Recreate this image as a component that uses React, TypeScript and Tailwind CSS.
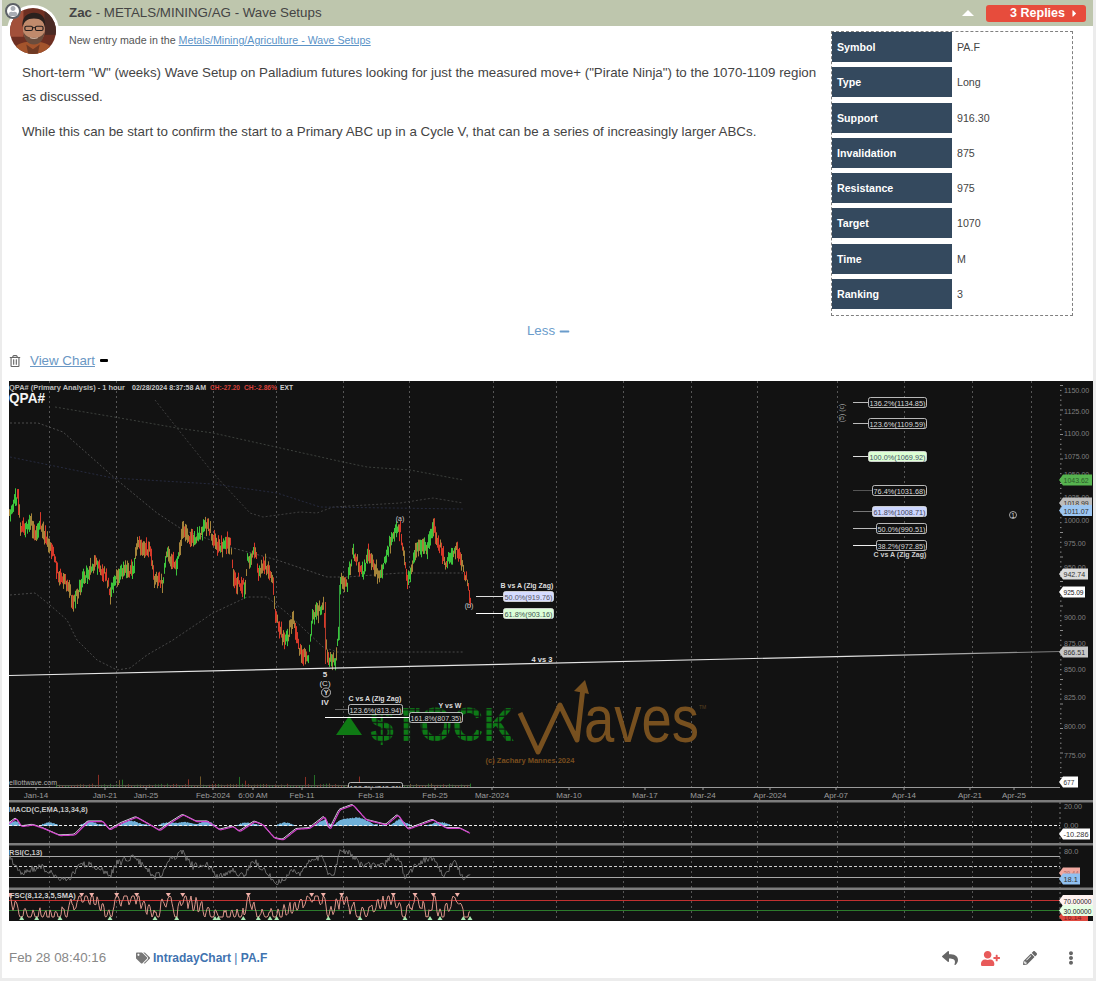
import { FaCaretRight, FaEllipsisV, FaMinus, FaPencilAlt, FaRegTrashAlt, FaReply, FaTags, FaUser, FaUserPlus } from "react-icons/fa"

type Pt = [number, number]

// small seeded generator so the chart comes out the same every load
function rng(seed: number) {
  let s = seed
  return () => {
    s = (s + 0x6d2b79f5) | 0
    let t = Math.imul(s ^ (s >>> 15), 1 | s)
    t = (t + Math.imul(t ^ (t >>> 7), 61 | t)) ^ t
    return ((t ^ (t >>> 14)) >>> 0) / 4294967296
  }
}

function interp(pts: Pt[], x: number) {
  if (x <= pts[0][0]) return pts[0][1]
  for (let i = 1; i < pts.length; i++) {
    if (x <= pts[i][0]) {
      const [x0, y0] = pts[i - 1]
      const [x1, y1] = pts[i]
      return y0 + ((y1 - y0) * (x - x0)) / (x1 - x0)
    }
  }
  return pts[pts.length - 1][1]
}

const toLine = (pts: Pt[]) => pts.map(([x, y]) => `${x.toFixed(1)},${y.toFixed(1)}`).join(" ")
const zoomPts = (z: Pt[]): Pt[] => z.map(([x, y]) => [x / 3, 770 + y / 3])

function smooth(pts: Pt[], win: number) {
  const out: Pt[] = []
  for (let x = 9; x <= 470; x++) {
    let sum = 0
    for (let k = -win; k <= win; k++) sum += interp(pts, x + k)
    out.push([x, sum / (win * 2 + 1)])
  }
  return out
}

const pricePath: Pt[] = [
  [9, 517], [14, 500], [18, 496], [20, 525], [24, 530], [30, 520], [35, 535], [40, 525], [46, 540], [52, 550], [58, 575], [63, 578],
  [70, 590], [72, 605], [78, 590], [85, 575], [92, 565], [98, 565], [105, 575], [110, 592], [115, 577], [125, 570], [133, 570],
  [137, 545], [150, 550], [153, 577], [162, 583], [167, 553], [177, 567], [182, 530], [193, 540], [207, 524], [217, 547], [230, 543],
  [233, 580], [245, 587], [247, 560], [255, 552], [258, 573], [263, 563], [272, 577], [275, 617], [285, 643], [293, 618], [300, 653],
  [308, 658], [312, 617], [323, 605], [327, 660], [335, 660], [338, 630], [340, 582], [347, 583], [352, 553], [363, 573], [367, 555],
  [380, 577], [392, 535], [400, 530], [407, 580], [417, 550], [427, 547], [433, 526], [445, 563], [457, 548], [467, 583], [469, 598],
]

function buildCandles() {
  const r = rng(7)
  const d = { g: "", o: "", e: "" }
  for (let x = 9; x <= 470; x++) {
    const y = interp(pricePath, x) + (r() - 0.5) * 9
    const h = 3 + r() * 6
    const slope = interp(pricePath, x + 2) - interp(pricePath, x - 2)
    const c = r()
    const seg = `M${x + 0.5} ${(y - h).toFixed(1)}V${(y + h).toFixed(1)}`
    if (slope < -1.5) {
      if (c < 0.62) d.g += seg
      else d.o += seg
    } else if (slope > 1.5) {
      if (c < 0.55) d.e += seg
      else d.o += seg
    } else if (c < 0.3) d.g += seg
    else if (c < 0.75) d.o += seg
    else d.e += seg
  }
  return d
}

const candles = buildCandles()

const macd = smooth(zoomPts([
  [30, 160], [50, 145], [65, 170], [100, 165], [130, 175], [180, 197], [225, 195], [265, 155], [310, 155], [330, 180], [365, 160], [410, 142],
  [460, 170], [480, 182], [510, 160], [550, 135], [590, 155], [625, 155], [660, 180], [700, 170], [720, 185], [765, 155], [790, 165],
  [825, 205], [850, 210], [890, 178], [930, 175], [975, 140], [990, 180], [1020, 120], [1060, 105], [1100, 150], [1160, 165], [1195, 135],
  [1225, 178], [1300, 150], [1340, 175], [1380, 175], [1410, 190],
]), 1)

const rsiBase = zoomPts([
  [30, 265], [60, 310], [120, 290], [180, 325], [215, 320], [240, 280], [300, 290], [330, 320], [350, 280], [405, 260], [460, 320], [490, 310],
  [510, 270], [545, 245], [580, 290], [620, 280], [650, 320], [700, 300], [730, 320], [760, 270], [810, 320], [840, 340], [880, 300], [900, 320],
  [930, 265], [970, 260], [985, 320], [1005, 305], [1020, 240], [1050, 250], [1080, 285], [1150, 290], [1175, 255], [1200, 270], [1215, 320],
  [1250, 285], [1295, 260], [1330, 320], [1365, 270], [1385, 320], [1410, 320],
])

function noisy(base: Pt[], seed: number, amp: number, step: number) {
  const r = rng(seed)
  const out: Pt[] = []
  for (let x = 9; x <= 470; x += step) out.push([x, interp(base, x) + (r() - 0.5) * amp])
  return out
}

const rsi = noisy(rsiBase, 3, 7, 1)

const fscHigh = [30, 245, 275, 350, 410, 505, 548, 745, 935, 970, 1025, 1180, 1245, 1300, 1372].map((v) => v / 3)
const fscLow = [65, 110, 180, 330, 465, 530, 645, 655, 730, 775, 810, 830, 985, 1080, 1215, 1290, 1320, 1390, 1410].map((v) => v / 3)

function buildFsc() {
  const r = rng(11)
  const events: Pt[] = [
    ...fscHigh.map((x): Pt => [x, 898]),
    ...fscLow.map((x): Pt => [x, 916]),
  ].sort((a, b) => a[0] - b[0])
  const out: Pt[] = []
  for (let x = 9; x <= 470; x += 1) {
    const y = interp(events, x) + Math.sin(x * 0.95 + Math.sin(x * 0.13) * 2) * 6 + (r() - 0.5) * 5
    out.push([x, Math.max(896, Math.min(917, y))])
  }
  return out
}

const fsc = buildFsc()

function buildVolume() {
  const r = rng(21)
  const bars: { x: number; h: number; c: string }[] = []
  for (let x = 56; x <= 470; x += 3) {
    const spike = r() > 0.92
    const h = spike ? 5 + r() * 9 : 1 + r() * 2.5
    const c = r()
    bars.push({ x, h, c: c < 0.4 ? "#236f26" : c < 0.75 ? "#8a2e24" : "#6f5628" })
  }
  return bars
}

const volume = buildVolume()

const histogram = (() => {
  const r = rng(5)
  let d = ""
  for (let x = 9; x <= 470; x++) {
    const m = 825 - interp(macd, x)
    const h = Math.max(0, m * 0.4) + Math.max(0, Math.sin(x * 0.16)) * 3 + r() * 0.8
    if (h > 1) d += `M${x + 0.5} 826V${(826 - h).toFixed(1)}`
  }
  return d
})()

const grid = [49.5, 116.5, 213.5, 276.5, 343.5, 409.5, 493.5, 556.5, 623.5, 691.5, 757.5, 837.5, 904.5, 972.5, 1031.5]

const xLabels: [string, number][] = [
  ["Jan-14", 36], ["Jan-21", 105], ["Jan-25", 146], ["Feb-2024", 213], ["6:00 AM", 253], ["Feb-11", 302], ["Feb-18", 371], ["Feb-25", 435],
  ["Mar-2024", 492], ["Mar-10", 569], ["Mar-17", 645], ["Mar-24", 703], ["Apr-2024", 770], ["Apr-07", 836], ["Apr-14", 904], ["Apr-21", 970], ["Apr-25", 1014],
]

const yLabels: [string, number][] = [
  ["1150.00", 390], ["1125.00", 411], ["1100.00", 433], ["1075.00", 456], ["1050.00", 474], ["1025.00", 497], ["1000.00", 520], ["975.00", 543],
  ["950.00", 567], ["900.00", 617], ["875.00", 643], ["850.00", 669], ["825.00", 697], ["800.00", 726], ["775.00", 755],
  ["20.00", 806], ["0.00", 825], ["80.0", 851], ["40.0", 871],
]

const dimLines: { pts: Pt[]; color: string }[] = [
  { color: "#3c403c", pts: [[55, 407], [120, 418], [177, 428], [213, 433], [343, 462], [367, 467], [410, 470], [463, 480]] },
  { color: "#4a4a4a", pts: [[10, 423], [38, 423], [63, 432], [117, 480], [157, 513], [183, 530], [233, 548], [277, 560], [327, 577], [347, 577], [400, 573], [463, 573]] },
  { color: "#3e3e3e", pts: [[155, 400], [177, 428], [213, 473], [250, 513], [263, 517], [300, 512], [317, 513], [333, 507], [400, 503], [433, 498], [463, 503]] },
  { color: "#262a3e", pts: [[10, 457], [113, 478], [213, 484], [277, 493], [320, 507], [463, 509]] },
  { color: "#484848", pts: [[10, 595], [35, 593], [50, 605], [67, 620], [77, 640], [97, 660], [117, 670], [130, 668], [147, 655], [173, 640], [213, 613], [247, 597], [267, 597], [287, 613], [323, 647], [337, 652], [463, 652]] },
]

function Lab({ x, y, w, text, fill = "#111", color = "#d8d8d8", lineFrom, lineColor = "#ddd" }: { x: number; y: number; w: number; text: string; fill?: string; color?: string; lineFrom?: number; lineColor?: string }) {
  return (
    <g>
      {lineFrom !== undefined && <line x1={lineFrom} x2={x} y1={y + 0.5} y2={y + 0.5} stroke={lineColor} />}
      <rect x={x + 0.5} y={y - 4.5} width={w} height={10} rx={2} fill={fill} stroke="#e4e4e4" strokeWidth={0.8} />
      <text x={x + 1.5} y={y + 3.5} fontSize={8} fill={color} textLength={w - 2} lengthAdjust="spacingAndGlyphs">{text}</text>
    </g>
  )
}

function Badge({ y, text, fill, end, color = "#333" }: { y: number; text: string; fill: string; end: number; color?: string }) {
  return (
    <g>
      <polygon points={`1059,${y} 1063,${y - 5.5} ${end},${y - 5.5} ${end},${y + 5.5} 1063,${y + 5.5}`} fill={fill} />
      <text x={1063.5} y={y + 3} fontSize={8} fill={color} textLength={Math.min(text.length * 3.6, end - 1065)} lengthAdjust="spacingAndGlyphs">{text}</text>
    </g>
  )
}

function Chart() {
  return (
    <svg className="block h-[540px] w-[1084px] shrink-0" viewBox="9 381 1084 540" role="img" aria-label="PA.F chart">
      <defs>
        <linearGradient id="trend" gradientUnits="userSpaceOnUse" x1="9" y1="0" x2="1060" y2="0">
          <stop offset="0" stopColor="#e8e8e8" />
          <stop offset="0.8" stopColor="#e0e0e0" />
          <stop offset="1" stopColor="#777" />
        </linearGradient>
        <pattern id="pixels" patternUnits="userSpaceOnUse" width="6.4" height="6.4">
          <rect width="5.2" height="5.2" fill="#0d7a16" />
        </pattern>
      </defs>
      <rect x={9} y={381} width={1084} height={540} fill="#121212" />

      {grid.map((x) => (
        <line key={x} x1={x} x2={x} y1={381} y2={921} stroke="#565656" strokeDasharray="2 3" />
      ))}

      {dimLines.map((l) => (
        <polyline key={l.color + l.pts[0][0]} points={toLine(l.pts)} fill="none" stroke={l.color} strokeDasharray="2 2" />
      ))}

      <text x={9} y={390} fontSize={8} fontWeight={700} fill="#bdbdbd" textLength={116} lengthAdjust="spacingAndGlyphs">QPA# (Primary Analysis) - 1 hour</text>
      <text x={132} y={389.5} fontSize={7.5} fontWeight={700} fill="#c8c8c8" textLength={74} lengthAdjust="spacingAndGlyphs">02/28/2024 8:37:58 AM</text>
      <text x={210} y={389.5} fontSize={7.5} fontWeight={700} fill="#d8413a" textLength={30} lengthAdjust="spacingAndGlyphs">CH:-27.20</text>
      <text x={244} y={389.5} fontSize={7.5} fontWeight={700} fill="#d8413a" textLength={33} lengthAdjust="spacingAndGlyphs">CH:-2.86%</text>
      <text x={280} y={389.5} fontSize={7.5} fontWeight={700} fill="#d0d0d0" textLength={13} lengthAdjust="spacingAndGlyphs">EXT</text>
      <text x={9} y={403} fontSize={15} fontWeight={700} fill="#f4f4f4" textLength={36} lengthAdjust="spacingAndGlyphs">QPA#</text>

      <path d={candles.o} stroke="#a5843a" fill="none" />
      <path d={candles.e} stroke="#d8392a" fill="none" />
      <path d={candles.g} stroke="#3cc43c" fill="none" />
      <line x1={18.5} x2={18.5} y1={489} y2={515} stroke="#d8392a" />
      <line x1={325.5} x2={325.5} y1={602} y2={664} stroke="#b53a2a" />
      <line x1={339.5} x2={339.5} y1={585} y2={640} stroke="#2f9a3a" />

      <line x1={9} y1={675.5} x2={1060} y2={651.5} stroke="url(#trend)" strokeWidth={1.2} />
      <text x={542} y={662} textAnchor="middle" fontSize={7.5} fontWeight={700} fill="#e0e0e0">4 vs 3</text>

      {/* logo watermark */}
      <polygon points="336,735 349,716 362,735" fill="#0f7a14" />
      <text x={370} y={741} fontSize={48} fontWeight={700} fill="url(#pixels)" textLength={144} lengthAdjust="spacingAndGlyphs">$TOCK</text>
      <polyline points="520,713 538,752 560,705 577,740 583,688" fill="none" stroke="#77501f" strokeWidth={5} strokeLinejoin="round" />
      <polygon points="574,691 585,680 589,694" fill="#77501f" />
      <text x={584} y={742} fontSize={66} fill="#77501f" textLength={115} lengthAdjust="spacingAndGlyphs">aves</text>
      <text x={699} y={709} fontSize={5} fill="#5b4020">TM</text>
      <text x={530} y={763} textAnchor="middle" fontSize={7.5} fontWeight={700} fill="#7a4e1e">(c) Zachary Mannes 2024</text>

      <text x={400} y={521} textAnchor="middle" fontSize={7} fill="#ccc">(a)</text>
      <text x={469} y={608} textAnchor="middle" fontSize={7} fill="#ccc">(b)</text>
      <text x={325} y={677} textAnchor="middle" fontSize={8} fontWeight={700} fill="#ddd">5</text>
      <text x={325} y={686} textAnchor="middle" fontSize={8} fill="#ddd">(C)</text>
      <circle cx={326} cy={692.5} r={4.5} fill="none" stroke="#ddd" strokeWidth={0.8} />
      <text x={326} y={695} textAnchor="middle" fontSize={7} fontWeight={700} fill="#ddd">Y</text>
      <text x={325} y={705} textAnchor="middle" fontSize={8} fontWeight={700} fill="#ddd">IV</text>

      <text x={527} y={588} textAnchor="middle" fontSize={7} fontWeight={700} fill="#ddd">B vs A (Zig Zag)</text>
      <Lab x={503} y={596} w={50} text="50.0%(919.76)" fill="#d6dcff" color="#556" lineFrom={476} />
      <Lab x={503} y={613} w={50} text="61.8%(903.16)" fill="#dcffd8" color="#455" lineFrom={476} lineColor="#fff" />

      <text x={375} y={701} textAnchor="middle" fontSize={7} fontWeight={700} fill="#ddd">C vs A (Zig Zag)</text>
      <Lab x={348} y={709} w={54} text="123.6%(813.94)" lineFrom={335} lineColor="#666" />
      <line x1={325} x2={409} y1={717.5} y2={717.5} stroke="#fff" />
      <Lab x={409} y={717} w={53} text="161.8%(807.35)" />
      <text x={450} y={708} textAnchor="middle" fontSize={7} fontWeight={700} fill="#ddd">Y vs W</text>

      <g transform="rotate(-90 841 413)">
        <text x={841} y={416} textAnchor="middle" fontSize={7} fill="#aaa">(5) (c)</text>
      </g>
      <Lab x={868} y={402} w={58} text="136.2%(1134.85)" lineFrom={853} lineColor="#bbb" />
      <Lab x={868} y={423} w={58} text="123.6%(1109.59)" lineFrom={853} lineColor="#bbb" />
      <Lab x={868} y={456} w={58} text="100.0%(1069.92)" fill="#dcffd4" color="#456" lineFrom={853} lineColor="#ddd" />
      <Lab x={872} y={490} w={54} text="76.4%(1031.68)" lineFrom={853} lineColor="#555" />
      <Lab x={872} y={511} w={54} text="61.8%(1008.71)" fill="#ccd6ff" color="#445" lineFrom={853} lineColor="#777" />
      <Lab x={876} y={528} w={50} text="50.0%(990.51)" lineFrom={853} lineColor="#bbb" />
      <Lab x={876} y={545} w={50} text="38.2%(972.85)" lineFrom={853} lineColor="#eee" />
      <text x={900} y={557} textAnchor="middle" fontSize={7} fontWeight={700} fill="#ccc">C vs A (Zig Zag)</text>
      <circle cx={1013} cy={515} r={3.5} fill="none" stroke="#ccc" strokeWidth={0.8} />
      <text x={1013} y={517.5} textAnchor="middle" fontSize={6.5} fill="#ddd">1</text>

      {/* volume strip, the x axis band covers what runs past it */}
      <text x={9} y={785} fontSize={7.5} fill="#b0b0b0" textLength={48} lengthAdjust="spacingAndGlyphs">elliottwave.com</text>
      {volume.map((b) => (
        <line key={b.x} x1={b.x + 0.5} x2={b.x + 0.5} y1={787} y2={787 - b.h} stroke={b.c} />
      ))}
      <line x1={57} x2={470} y1={785.5} y2={785.5} stroke="#55554a" />
      <Lab x={348} y={787} w={54} text="138.2%(748.81)" />
      <rect x={9} y={787} width={1051} height={14} fill="#121212" />
      <line x1={9} x2={1060} y1={787.5} y2={787.5} stroke="#9a9a9a" />
      {xLabels.map(([t, x]) => (
        <g key={t}>
          <line x1={x} x2={x} y1={787} y2={790} stroke="#999" />
          <text x={x} y={798} textAnchor="middle" fontSize={8} fill="#9c9c9c">{t}</text>
        </g>
      ))}

      {/* MACD panel */}
      <rect x={9} y={800} width={1084} height={2.5} fill="#7c7c7c" />
      <text x={9} y={812} fontSize={7.5} fontWeight={700} fill="#c4c4c4">MACD(C,EMA,13,34,8)</text>
      <path d={histogram} stroke="#6fb0d8" fill="none" />
      <line x1={9} x2={1060} y1={825.5} y2={825.5} stroke="#eee" strokeDasharray="3 2" />
      <polyline points={toLine(macd.map(([x, y]) => [x - 1, y - 0.8]))} fill="none" stroke="#e8e8f0" strokeWidth={0.9} />
      <polyline points={toLine(macd)} fill="none" stroke="#d23fcb" strokeWidth={1.2} />

      {/* RSI panel */}
      <rect x={9} y={843} width={1084} height={2.5} fill="#7c7c7c" />
      <text x={9} y={855} fontSize={7.5} fontWeight={700} fill="#c4c4c4">RSI(C,13)</text>
      <line x1={9} x2={1060} y1={856.5} y2={856.5} stroke="#a8a8a8" />
      <line x1={9} x2={1060} y1={866.5} y2={866.5} stroke="#cfcfcf" strokeDasharray="3 2" />
      <line x1={9} x2={1060} y1={877.5} y2={877.5} stroke="#a8a8a8" />
      <polyline points={toLine(rsi)} fill="none" stroke="#7e7e7e" strokeWidth={0.8} />

      {/* FSC panel */}
      <rect x={9} y={887.5} width={1084} height={2.5} fill="#7c7c7c" />
      <line x1={9} x2={1060} y1={900.5} y2={900.5} stroke="#c23030" />
      <line x1={9} x2={1060} y1={910.5} y2={910.5} stroke="#2c7a2c" />
      <polyline points={toLine(fsc)} fill="none" stroke="#d9958a" strokeWidth={1} />
      <text x={10} y={898} fontSize={7.5} fontWeight={700} fill="#d0d0d0">FSC(8,12,3,5,SMA)</text>
      {fscHigh.map((x) => (
        <polygon key={x} points={`${x - 2.5},893 ${x + 2.5},893 ${x},897`} fill="#f0b0a8" />
      ))}
      {fscLow.map((x) => (
        <polygon key={x} points={`${x - 2.5},920 ${x + 2.5},920 ${x},916`} fill="#a8e8b0" />
      ))}

      {/* right axis */}
      <rect x={1060} y={381} width={33} height={540} fill="#121212" />
      {Array.from({ length: 82 }, (_, i) => (
        <line key={i} x1={1060} x2={i % 5 === 0 ? 1063 : 1061.5} y1={385.5 + i * 4.9} y2={385.5 + i * 4.9} stroke="#8a8a8a" />
      ))}
      <line x1={1060} x2={1060} y1={802} y2={921} stroke="#777" strokeDasharray="2 3" />
      <rect x={1060} y={800} width={33} height={2.5} fill="#7c7c7c" />
      <rect x={1060} y={843} width={33} height={2.5} fill="#7c7c7c" />
      <rect x={1060} y={887.5} width={33} height={2.5} fill="#7c7c7c" />
      {yLabels.map(([t, y]) => (
        <text key={t} x={1064} y={y + 3} fontSize={8} fill="#808080" textLength={t.length * 3.6} lengthAdjust="spacingAndGlyphs">{t}</text>
      ))}
      <Badge y={480} text="1043.62" fill="#56b34f" end={1092} color="#2c5a2a" />
      <Badge y={503} text="1018.99" fill="#bdbdbd" end={1092} />
      <Badge y={510.5} text="1011.07" fill="#9cc6f2" end={1092} />
      <Badge y={574} text="942.74" fill="#dcdcdc" end={1088} />
      <Badge y={592} text="925.09" fill="#ffffff" end={1085} color="#111" />
      <Badge y={652} text="866.51" fill="#c8c8c8" end={1088} />
      <Badge y={782} text="677" fill="#ffffff" end={1078} />
      <Badge y={834} text="-10.286" fill="#ffffff" end={1090} />
      <Badge y={873} text="29.44" fill="#f0a8a0" end={1080} color="#a66" />
      <Badge y={879} text="18.1" fill="#90c0f0" end={1080} />
      <Badge y={916.5} text="16.14" fill="#e04a40" end={1088} color="#7a2020" />
      <Badge y={900.5} text="70.00000" fill="#fff2f0" end={1093} color="#222" />
      <Badge y={910.5} text="30.00000" fill="#e6ffe4" end={1093} color="#222" />
    </svg>
  )
}

function Avatar() {
  return (
    <div className="absolute left-[5px] top-[3px]">
      <div className="ml-[2px] mt-[2px] size-[52px] rounded-full bg-white p-[3px]">
        <svg viewBox="0 0 48 48" className="block size-[46px] rounded-full">
          <rect width="48" height="48" fill="#6e2f22" />
          <rect x="0" y="0" width="14" height="30" fill="#a2503a" />
          <rect x="36" y="2" width="12" height="26" fill="#4a2a24" />
          <path d="M2 48c1-9 9-13 22-13s21 4 22 13z" fill="#a4542c" />
          <path d="M17 38l7 5 7-5-2 10H19z" fill="#6f3a24" />
          <ellipse cx="25" cy="22" rx="11.5" ry="15" fill="#c08a6c" />
          <path d="M13 20c-1-10 5-15 12-15s13 4 11.500 15c-1.500-6-4-9-11.500-9s-10 3-12 9z" fill="#2b211e" />
          <path d="M14 25c1 9 5 13 11 13s10-4 11-13c-2 4-5 6-11 6s-9-2-11-6z" fill="#6a4c3c" />
          <rect x="15.500" y="19" width="8" height="4.500" rx="1.500" fill="none" stroke="#231d1d" strokeWidth="1.200" />
          <rect x="26.500" y="19" width="8" height="4.500" rx="1.500" fill="none" stroke="#231d1d" strokeWidth="1.200" />
          <line x1="23.500" y1="20.500" x2="26.500" y2="20.500" stroke="#231d1d" strokeWidth="1" />
          <path d="M21 31c2.500 1 5.500 1 8 0" fill="none" stroke="#e6cdbc" strokeWidth="0.900" />
        </svg>
      </div>
      <div className="absolute left-0 top-0 flex size-[16px] items-center justify-center rounded-full border-2 border-[#5c6066] bg-white">
        <FaUser className="size-[10px] text-[#a9adb4]" />
      </div>
    </div>
  )
}

const details: [string, string][] = [
  ["Symbol", "PA.F"],
  ["Type", "Long"],
  ["Support", "916.30"],
  ["Invalidation", "875"],
  ["Resistance", "975"],
  ["Target", "1070"],
  ["Time", "M"],
  ["Ranking", "3"],
]

export default function App() {
  return (
    <div className="relative h-[981px] w-[1096px] overflow-hidden bg-[#ececec] font-['Liberation_Sans',Arial,sans-serif]">
      <div className="ml-[2px] flex h-[978px] w-[1091px] flex-col bg-white">
        <div className="flex h-[26px] shrink-0 items-center bg-[#bec6ad] pl-[67px] pr-[7px] text-[13.33px] text-[#444]">
          <span>
            <b>Zac</b> - METALS/MINING/AG - Wave Setups
          </span>
          <span className="ml-auto mr-[12px] h-0 w-0 border-x-[6px] border-b-[6px] border-x-transparent border-b-white" />
          <button className="flex h-[17px] w-[100px] items-center justify-end rounded-[3px] bg-[#e74c3c] pr-[6px] text-[12.5px] font-bold text-white">
            3 Replies
            <FaCaretRight className="ml-[4px] size-[11px]" />
          </button>
        </div>

        <div className="flex h-[290px] shrink-0">
          <div className="w-[829px] shrink-0">
            <p className="pl-[67px] pt-[8px] text-[10.67px] leading-[13px] text-[#555]">
              New entry made in the{" "}
              <a className="text-[#5b93c7] underline">Metals/Mining/Agriculture - Wave Setups</a>
            </p>
            <div className="pl-[20px] pt-[14px] text-[13.33px] leading-[24px] text-[#444]">
              <p className="w-[800px]">
                Short-term "W" (weeks) Wave Setup on Palladium futures looking for just the measured move+ ("Pirate Ninja") to the 1070-1109 region as discussed.
              </p>
              <p className="mt-[11px]">
                While this can be start to confirm the start to a Primary ABC up in a Cycle V, that can be a series of increasingly larger ABCs.
              </p>
            </div>
          </div>
          <div className="mt-[5px] flex h-[285px] w-[242px] shrink-0 flex-col gap-[5.3px] border border-dashed border-[#808080]">
            {details.map(([k, v]) => (
              <div key={k} className="flex h-[30px] shrink-0 items-center text-[10.67px]">
                <div className="flex h-full w-[120px] items-center bg-[#34495e] pl-[5px] font-bold text-white">{k}</div>
                <div className="pl-[5px] text-[#444]">{v}</div>
              </div>
            ))}
          </div>
        </div>

        <div className="flex h-[29px] shrink-0 items-center justify-center pl-[2px] pt-[1px] text-[13.33px] text-[#6a9ccb]">
          Less
          <FaMinus className="ml-[4px] size-[11px]" />
        </div>

        <div className="flex h-[36px] shrink-0 items-center pb-[5px] pl-[7px]">
          <FaRegTrashAlt className="size-[12px] text-[#666]" />
          <a className="ml-[9px] text-[13.33px] text-[#6a97c4] underline">View Chart</a>
          <span className="ml-[5px] h-[3px] w-[8px] rounded-[1px] bg-black" />
        </div>

        <div className="ml-[7px] shrink-0">
          <Chart />
        </div>

        <div className="flex flex-1 items-center pl-[7px] pt-[17px] text-[13.33px]">
          <span className="w-[127px] text-[#888]">Feb 28 08:40:16</span>
          <FaTags className="size-[14px] text-[#777]" />
          <span className="ml-[3px] text-[12px] font-bold text-[#3f73b0]">
            IntradayChart <span className="font-normal">|</span> PA.F
          </span>
          <div className="ml-auto mr-[15px] flex items-center">
            <FaReply className="size-[16px] text-[#666]" />
            <FaUserPlus className="ml-[23px] size-[19px] text-[#e85a5a]" />
            <FaPencilAlt className="ml-[23px] size-[14px] text-[#666]" />
            <FaEllipsisV className="ml-[27px] size-[14px] text-[#666]" />
          </div>
        </div>
      </div>
      <Avatar />
    </div>
  )
}
